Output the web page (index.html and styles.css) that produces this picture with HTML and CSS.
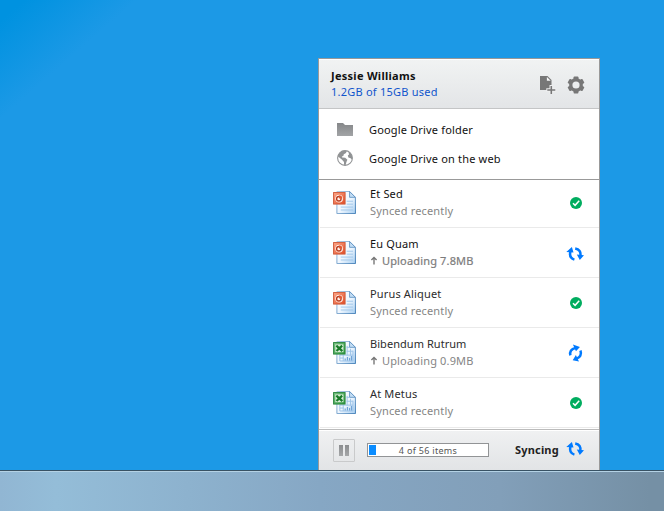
FILE: index.html
```html
<!DOCTYPE html>
<html lang="en">
<head>
<meta charset="utf-8">
<title>Google Drive</title>
<link rel="stylesheet" href="styles.css">
</head>
<body>
<svg class="defs" width="0" height="0" aria-hidden="true">
  <defs>
    <linearGradient id="page" x1="0" y1="0" x2="1" y2="1"><stop offset="0" stop-color="#fff"/><stop offset=".55" stop-color="#eef6fe"/><stop offset="1" stop-color="#a5cdf0"/></linearGradient>
    <linearGradient id="edge" x1="0" y1="0" x2="1" y2="1"><stop offset="0" stop-color="#b4cde6"/><stop offset="1" stop-color="#3a79b4"/></linearGradient>
    <linearGradient id="red" x1="0" y1="0" x2="1" y2="1"><stop offset="0" stop-color="#ffa98c"/><stop offset="1" stop-color="#e04a22"/></linearGradient>
    <linearGradient id="green" x1="0" y1="0" x2="1" y2="1"><stop offset="0" stop-color="#7cc284"/><stop offset="1" stop-color="#2c963c"/></linearGradient>
    <linearGradient id="grey" x1="0" y1="0" x2="0" y2="1"><stop offset="0" stop-color="#858789"/><stop offset="1" stop-color="#a2a4a6"/></linearGradient>
    <symbol id="sheet" viewBox="0 0 24 24">
      <path d="M4 .5H17L23 6.5V23.2H4Z" fill="url(#page)" stroke="url(#edge)"/>
      <path d="M17 .5V6.5H23Z" fill="#c4def5" stroke="#538abd" stroke-width=".8"/>
    </symbol>
    <symbol id="ppt" viewBox="0 0 24 24">
      <use href="#sheet" width="24" height="24"/>
      <path d="M14 10.5H20.5M14 13.5H20.5M8 16.5H20.5M8 19.5H20.5" stroke="#9fc6ea"/>
      <rect x=".6" y="1.6" width="11.8" height="11.8" fill="url(#red)" stroke="#d05a3a"/>
      <circle cx="6.3" cy="7.8" r="4" fill="#fff3ec"/>
      <circle cx="6" cy="8" r="2.3" fill="none" stroke="#b93c20" stroke-width="1.4"/>
      <path d="M6.3 7.8V4.4A3.4 3.4 0 0 1 9.6 7.8Z" fill="#df5833"/>
    </symbol>
    <symbol id="xls" viewBox="0 0 24 24">
      <use href="#sheet" width="24" height="24"/>
      <path d="M14 6.5H17M14 10.5H20.5M7 14.5H20.5M7 17.5H11M7 20.5H20.5M10.5 14V20.5M14.5 5V15M18 8V15M7 14V20.5M20.5 10V20.5" fill="none" stroke="#9cc3e8"/>
      <path d="M12.5 20V18M14.8 20V16.5M17 20V17.5M19 20V15.5" stroke="#6fa3d6" stroke-width="1.2"/>
      <rect x=".6" y="1.6" width="11.8" height="11.8" fill="url(#green)" stroke="#2a8740"/>
      <rect x="2.4" y="3.5" width="8.3" height="8" fill="#d9efd9"/>
      <path d="M3.4 4.8L9.6 10.3M9.4 4.8L3.6 10.3" stroke="#187b2a" stroke-width="2.3"/>
    </symbol>
    <symbol id="check" viewBox="0 0 12 12">
      <circle cx="6" cy="6" r="6" fill="#00ad5f"/>
      <path d="M3 6.2L5.1 8.3L9.2 3.7" fill="none" stroke="#fff" stroke-width="1.5"/>
    </symbol>
    <symbol id="sync" viewBox="0 0 18 14" overflow="visible">
      <g fill="none" stroke="#007aff" stroke-width="2.5"><path d="M7.4 12.6C3.6 11.5 2.4 8.2 3.5 4.2"/><path d="M8.2 1.4C12.3 2.1 14.1 5.2 13.3 9"/></g>
      <path d="M-.7 5L4.9 .1L6.5 5.6ZM9.8 7.6L17 8.2L12.8 13Z" fill="#007aff"/>
    </symbol>
  </defs>
</svg>
<main class="desktop">
  <section class="panel">
    <header class="header">
      <div class="account">
        <div class="name">Jessie Williams</div>
        <div class="quota">1.2GB of 15GB used</div>
      </div>
      <svg class="add" viewBox="0 0 17 18"><path d="M0 0H7.5L11.5 4V14H0Z" fill="#777"/><path d="M6.9 1V4.8H10.7Z" fill="#f7f8f8"/><path d="M11.3 9V19M6.3 14H16.3" stroke="#eeeff0" stroke-width="3.6"/><path d="M11.3 10V18M7.3 14H15.3" stroke="#777" stroke-width="1.6"/></svg>
      <svg class="gear" viewBox="0 0 18 18"><g fill="#777"><rect x="6.6" y=".5" width="4.8" height="17" rx=".8"/><rect x="6.6" y=".5" width="4.8" height="17" rx=".8" transform="rotate(60 9 9)"/><rect x="6.6" y=".5" width="4.8" height="17" rx=".8" transform="rotate(120 9 9)"/><circle cx="9" cy="9" r="6.9"/></g><circle cx="9" cy="9" r="3.6" fill="#ebedee"/></svg>
    </header>
    <nav class="links">
      <a class="link"><svg class="folder" viewBox="0 0 16 13"><path d="M0 0H6L8 2H16V13H0Z" fill="url(#grey)"/></svg><span>Google Drive folder</span></a>
      <a class="link web"><svg class="globe" viewBox="0 0 16 16"><circle cx="8" cy="8" r="7.4" fill="#fff" stroke="#909294" stroke-width="1.1"/><path d="M1 5.5L3 2.5L6 .8L9.7 1L9 3.1L6.8 4.2L6.3 5.9L4.8 6.6L5.2 7.6L8.2 7.8L10.4 9.8L9.4 12L8.6 15.2L7 14.8V12L4.8 9.6L1 6.5ZM11.5 2L13.5 3.3L15 6V9.5L13.6 8.2L11.4 7.6L10.8 5.6L12 4.4Z" fill="#909294"/></svg><span>Google Drive on the web</span></a>
    </nav>
    <ul class="files">
      <li class="file"><svg class="doc"><use href="#ppt"/></svg><div class="info"><div class="title">Et Sed</div><div class="state">Synced recently</div></div><svg class="check"><use href="#check"/></svg></li>
      <li class="file"><svg class="doc"><use href="#ppt"/></svg><div class="info"><div class="title">Eu Quam</div><div class="state up strong"><svg class="arrow" viewBox="0 0 8 9"><path d="M4 8.5V1.5M1.4 4.1L4 1.5L6.6 4.1" fill="none" stroke="#777" stroke-width="1.4"/></svg><span>Uploading 7.8MB</span></div></div><svg class="sync"><use href="#sync"/></svg></li>
      <li class="file"><svg class="doc"><use href="#ppt"/></svg><div class="info"><div class="title soft">Purus Aliquet</div><div class="state">Synced recently</div></div><svg class="check"><use href="#check"/></svg></li>
      <li class="file"><svg class="doc"><use href="#xls"/></svg><div class="info"><div class="title soft tight">Bibendum Rutrum</div><div class="state up"><svg class="arrow" viewBox="0 0 8 9"><path d="M4 8.5V1.5M1.4 4.1L4 1.5L6.6 4.1" fill="none" stroke="#777" stroke-width="1.4"/></svg><span>Uploading 0.9MB</span></div></div><svg class="sync turned"><use href="#sync"/></svg></li>
      <li class="file"><svg class="doc"><use href="#xls"/></svg><div class="info"><div class="title soft">At Metus</div><div class="state">Synced recently</div></div><svg class="check"><use href="#check"/></svg></li>
    </ul>
    <footer class="footer">
      <div class="pause"><i></i><i></i></div>
      <div class="progress"><div class="bar"></div><span class="count">4 of 56 items</span></div>
      <strong class="syncing">Syncing</strong>
      <svg class="sync"><use href="#sync"/></svg>
    </footer>
  </section>
</main>
<div class="taskbar"></div>
</body>
</html>
```

FILE: styles.css
```css
* { box-sizing: border-box; }
body { margin: 0; width: 664px; height: 511px; overflow: hidden; font: 11px/16px "Noto Sans", "Open Sans", sans-serif; color: #111; }
svg { display: block; flex: none; }
.defs { position: absolute; }
.desktop { height: 470px; padding: 58px 64px 0 0; display: flex; justify-content: flex-end; background: linear-gradient(139deg, #0092e0 0, #0092e0 16px, #1c99e6 90px); }
.panel { width: 282px; height: 412px; display: flex; flex-direction: column; background: #fff; border: 1px solid #999; border-bottom: 0; }
.header { height: 50px; display: flex; align-items: flex-start; padding: 9px 14px 0 12px; background: linear-gradient(#f1f3f3, #e3e5e7); border-bottom: 1px solid #c4c5c6; box-shadow: inset 0 1px #fff; }
.account { flex: 1; }
.name { font-weight: 700; letter-spacing: .28px; }
.quota { color: #1155cc; letter-spacing: .23px; }
.add { width: 17px; height: 18px; margin: 8px 10px 0 0; }
.gear { width: 18px; height: 18px; margin-top: 7.5px; }
.links { height: 71px; padding: 13px 0 0 18px; border-bottom: 1px solid #999; }
.link { display: flex; align-items: center; height: 16px; gap: 16px; letter-spacing: .17px; }
.web { margin-top: 13px; }
.folder { width: 16px; height: 13px; margin-top: -1px; }
.globe { width: 16px; height: 16px; margin-top: -2px; }
.files { list-style: none; margin: 0; padding: 0; }
.file { height: 50px; display: flex; margin-left: 1px; padding: 8px 14px 0 12.6px; border-bottom: 1px solid #eaeaea; }
.file:first-child { height: 48px; padding-top: 6px; }
.doc { width: 23.4px; height: 23.4px; margin-top: 5px; }
.info { flex: 1; margin-left: 14px; letter-spacing: .16px; }
.soft { color: #2c2c2c; }
.tight { letter-spacing: .05px; }
.state { color: #858585; line-height: 17px; }
.up { display: flex; align-items: center; gap: 4px; }
.arrow { width: 8px; height: 9px; }
.strong { color: #7c7c7c; -webkit-text-stroke: .2px #7c7c7c; }
.check { width: 12px; height: 12px; margin: 11px 3px 0 0; }
.sync { width: 18px; height: 14px; overflow: visible; }
.file .sync { margin-top: 11px; }
.turned { transform: rotate(60deg); }
.footer { height: 41px; margin-top: auto; display: flex; align-items: center; padding: 0 14px; background: linear-gradient(#f0f1f2, #e2e4e6); border-top: 1px solid #bbb; box-shadow: inset 0 1px #fff; }
.pause { width: 22px; height: 23px; display: flex; align-items: center; justify-content: center; gap: 2px; border: 1px solid #c9cacb; border-radius: 1px; }
.pause i { width: 4px; height: 11px; background: linear-gradient(#8b8d8f, #a5a7a9); }
.progress { width: 122px; height: 14px; margin-left: 12px; padding: 1px; display: flex; background: #fff; border: 1px solid #929496; }
.bar { width: 7px; height: 10px; background: #0a8cff; }
.count { flex: 1; margin-right: 7px; text-align: center; font-size: 9px; line-height: 11px; letter-spacing: .3px; color: #555; }
.syncing { margin-left: 26px; width: 52px; letter-spacing: .18px; color: #222; }
.footer .sync { margin-top: -2px; }
.taskbar { height: 41px; border-top: 1px solid #385264; box-shadow: inset 0 1px #b4d2e5; background: linear-gradient(90deg, #91b6d3, #94bdd8 56px, #86a7c4 320px, #829fb9 500px, #7590a5 650px); }
```
